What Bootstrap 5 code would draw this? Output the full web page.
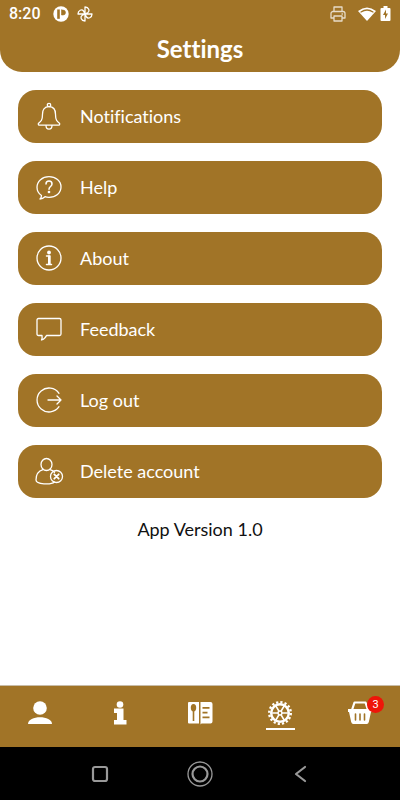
<!DOCTYPE html>
<html lang="en">
<head>
<meta charset="utf-8">
<meta name="viewport" content="width=device-width, initial-scale=1">
<title>Settings</title>
<link href="https://cdn.jsdelivr.net/npm/bootstrap@5.3.0/dist/css/bootstrap.min.css" rel="stylesheet">
<style>
:root { --brand: #a17427; }
body, button { font-family: Lato, "Open Sans", sans-serif; font-variant-ligatures: none; color: #111; }
.bg-brand { background: var(--brand); }
.app-header { border-radius: 0 0 22px 22px; height: 72px; }
.status-row { height: 27px; padding: 0 9px; font: 500 16px/27px Roboto, sans-serif; }
.app-title { font-size: 24px; line-height: 44px; font-weight: 700; }
.settings-list { padding: 18px; gap: 18px; }
.setting { height: 53px; border-radius: 18px; padding: 0 16px 2px; gap: 16px; font-size: 18px; line-height: 24px; color: #fff; }
.version { font-size: 18px; line-height: 26px; }
.tabs { height: 62px; border-top: 1px solid #c9bda8; }
.tab-link { height: 46px; padding-top: 11px; }
.tab-link svg, .sys svg { display: block; }
.tab-active { border-bottom: 2px solid #fff; width: 29px; height: 33px; }
.count { left: 19px; top: -1px; width: 17px; height: 17px; font: 11px/17px Roboto, sans-serif; background: #ee1509; }
.sys { height: 53px; background: #000; color: #999; }
svg { fill: none; stroke: currentColor; stroke-width: 1.3; stroke-linecap: round; stroke-linejoin: round; flex: none; }
.solid { fill: currentColor; stroke: none; }
</style>
<script src="https://cdn.jsdelivr.net/npm/bootstrap@5.3.0/dist/js/bootstrap.bundle.min.js"></script>
</head>
<body class="d-flex flex-column min-vh-100 bg-white">
<header class="app-header bg-brand text-white">
  <div class="status-row d-flex align-items-center">
    <span>8:20</span>
    <svg class="ms-2 ps-1" width="20" height="16" viewBox="0 0 16 16"><circle cx="8" cy="8" r="7.7" fill="#fff" stroke="none"/><path d="M4.500 4v8.500h2V4zM8.500 4v5h1.500a2.500 2.500 0 0 0 0-5z" fill="#a17427" stroke="#a17427" stroke-width=".6"/></svg>
    <svg class="ms-2" width="16" height="16" viewBox="0 0 16 16"><path d="M8 8V1c4 0 5 4 3 5.500zM8 8h7c0 4-4 5-5.500 3zM8 8v7c-4 0-5-4-3-5.500zM8 8H1c0-4 4-5 5.500-3z"/></svg>
    <svg class="ms-auto opacity-75" width="16" height="16" viewBox="0 0 16 16"><path d="M4 5.500V1h8v4.500M4 12H1V7.500a2 2 0 0 1 2-2h10a2 2 0 0 1 2 2V12h-3M4 10h8v5H4zM12 8h.5"/></svg>
    <svg class="ms-2 ps-1 solid" width="22" height="14" viewBox="0 0 18 14"><path d="M0 4Q9-3 18 4L9 14z"/><path d="M3 5Q9 1 15 5" fill="none" stroke="#a17427"/></svg>
    <svg class="ms-1 solid" width="11" height="15" viewBox="0 0 10 15"><path d="M1 2h2V0h4v2h2q1 0 1 1v11q0 1-1 1H1q-1 0-1-1V3q0-1 1-1z"/><path d="M5.500 3.500L2.500 9h2v4L7.500 7.500h-2z" fill="#a17427"/></svg>
  </div>
  <h1 class="app-title text-center m-0">Settings</h1>
</header>
<main class="flex-grow-1">
  <div class="settings-list d-flex flex-column">
    <button type="button" class="setting btn bg-brand border-0 d-flex align-items-center text-start">
      <svg width="30" height="30" viewBox="0 0 30 30"><circle cx="15" cy="4" r="1.700"/><path d="M15 5.700c-4.700 0-6.500 3.300-6.500 7.500 0 5.800-1.500 7.200-3.900 9-.8 1 0 2 1 2h18.800c1 0 1.800-1 1-2-2.400-1.800-3.900-3.200-3.900-9 0-4.200-1.800-7.500-6.500-7.500zM12 24.500c0 4.800 6 4.800 6 0"/></svg>Notifications</button>
    <button type="button" class="setting btn bg-brand border-0 d-flex align-items-center text-start">
      <svg width="30" height="30" viewBox="0 0 30 30"><path d="M7.500 23.500C4.500 21.500 3 18.500 3 15.300 3 9 8.300 4.700 15 4.700s12 4.300 12 10.300-5.300 10.300-12 10.300c-1.500 0-3-.2-4-.6-1.500 1.500-3 2.300-5 2.300 1-1 1.500-2 1.500-3.500z"/><path d="M12 12c0-4 6-4 6 0 0 2.500-3 2.500-3 5.200" stroke-width="1.500"/><circle cx="15" cy="20" r=".7"/></svg>Help</button>
    <button type="button" class="setting btn bg-brand border-0 d-flex align-items-center text-start">
      <svg width="30" height="30" viewBox="0 0 30 30"><circle cx="15" cy="15" r="12"/><circle cx="15" cy="9.500" r="1.900" fill="#fff" stroke="none"/><path d="M12.500 13h3M12.500 21.500h5" stroke-width="1.500"/><path d="M14 12.500h2.700v9H14z" fill="#fff" stroke="none"/></svg>About</button>
    <button type="button" class="setting btn bg-brand border-0 d-flex align-items-center text-start">
      <svg width="30" height="30" viewBox="0 0 30 30"><path d="M4.500 4.500h21q1.500 0 1.500 1.500v14q0 1.500-1.500 1.500H12.500q-1.500 3.500-5 4.500 1-2 .5-4.500H4.500Q3 21.500 3 20V6q0-1.500 1.500-1.500z"/></svg>Feedback</button>
    <button type="button" class="setting btn bg-brand border-0 d-flex align-items-center text-start">
      <svg width="30" height="30" viewBox="0 0 30 30"><path d="M25 8.300a12 12 0 1 0 0 13.400M14 15h13M23 11l4 4-4 4"/></svg>Log out</button>
    <button type="button" class="setting btn bg-brand border-0 d-flex align-items-center text-start">
      <svg width="30" height="30" viewBox="0 0 30 30"><ellipse cx="12.500" cy="8.500" rx="5.500" ry="6"/><path d="M9 13.700C4.500 15 2 18.500 2 24c0 4.500 15 5 18.500 2M16 13.700c2 .6 3.500 1.500 4.500 2.500"/><circle cx="22.500" cy="20.500" r="6"/><path d="M20.300 18.300l4.400 4.400M24.700 18.300l-4.400 4.400" stroke-width="1.800"/></svg>Delete account</button>
  </div>
  <p class="version text-center m-0">App Version 1.0</p>
</main>
<footer>
  <nav class="tabs bg-brand row row-cols-5 g-0" aria-label="Main">
    <a href="#profile" class="tab-link col d-flex justify-content-center text-white" aria-label="Profile"><svg class="solid mt-1" width="24" height="24" viewBox="0 0 24 24"><circle cx="12" cy="7" r="6.800"/><path d="M0 23c0-9 24-9 24 0z"/></svg></a>
    <a href="#info" class="tab-link col d-flex justify-content-center text-white" aria-label="Information"><svg class="solid mt-1" width="24" height="24" viewBox="0 0 24 24"><circle cx="12" cy="3.500" r="3.300"/><path d="M6 7.500h9.500V19h3v4.500H6V19h3v-7H6z"/></svg></a>
    <a href="#menu" class="tab-link col d-flex justify-content-center text-white" aria-label="Menu"><svg class="solid mt-1" width="26" height="24" viewBox="0 0 26 24"><path d="M2 1h10v21.500H2q-1 0-1-1V2q0-1 1-1zM13.500 1h10q2 0 2 2v17.500q0 2-2 2h-9l-1 1z"/><g fill="#a17427"><ellipse cx="6.500" cy="6.800" rx="2.700" ry="3.700"/><path d="M5.700 9h1.600v11H5.700zM15.500 6h7v1.800h-7zM15.500 10.700h5v1.800h-5zM15.500 15.500h7v1.800h-7z"/></g></svg></a>
    <a href="#settings" class="tab-link col d-flex justify-content-center text-white" aria-label="Settings" aria-current="page"><span class="tab-active d-flex justify-content-center"><svg class="mt-1" width="24" height="24" viewBox="0 0 24 24"><circle cx="12" cy="12" r="8.800" stroke-width="2.400"/><circle cx="12" cy="12" r="10.800" stroke-width="2.400" stroke-dasharray="2.200 2.041" stroke-linecap="butt"/><path d="M4.500 12h15M8.200 5.500l7.600 13M15.800 5.500l-7.600 13" stroke-width="1.500"/><circle cx="12" cy="12" r="2" fill="#fff"/><circle cx="12" cy="12" r="1.200" fill="#a17427" stroke="none"/></svg></span></a>
    <a href="#basket" class="tab-link col d-flex justify-content-center text-white" aria-label="Basket, 3 items"><span class="position-relative"><svg class="solid mt-1" width="24" height="24" viewBox="0 0 24 24"><path d="M0 8h24v3h-1l-2.200 10q-.5 2-2 2H5.200q-1.500 0-2-2L1 11H0z"/><path d="M4 9l2.500-7.500h11L20 9" fill="none" stroke="#fff" stroke-width="2.200"/><path d="M7.500 13v6M12 13v6M16.500 13v6" stroke="#a17427" stroke-width="1.600"/></svg><span class="count position-absolute rounded-circle text-center">3</span></span></a>
  </nav>
  <div class="sys row g-0 align-items-center justify-content-center">
    <div class="col-3"><svg class="mx-auto" width="18" height="18" viewBox="0 0 18 18"><rect x="2" y="2" width="14" height="14" rx="2" stroke-width="2.200"/></svg></div>
    <div class="col-3"><svg class="mx-auto" width="26" height="26" viewBox="0 0 26 26"><circle cx="13" cy="13" r="12"/><circle cx="13" cy="13" r="7.500" stroke-width="2.200"/></svg></div>
    <div class="col-3"><svg class="mx-auto" width="18" height="18" viewBox="0 0 18 18"><path d="M14 2L5 9l9 7" stroke-width="2.200"/></svg></div>
  </div>
</footer>
</body>
</html>
